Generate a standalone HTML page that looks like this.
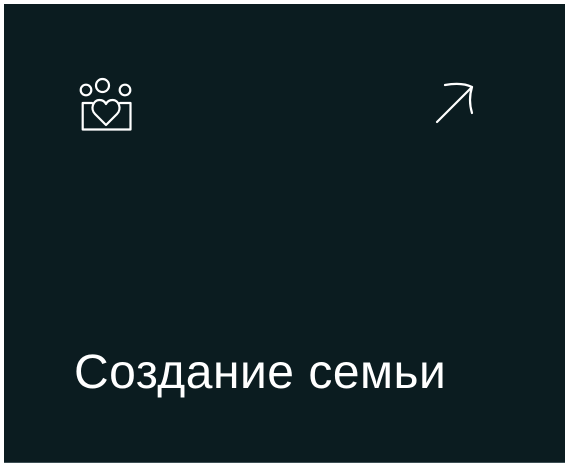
<!DOCTYPE html>
<html><head><meta charset="utf-8"><style>
html,body{margin:0;padding:0;background:#fff;width:569px;height:467px;overflow:hidden}
.card{position:absolute;left:4px;top:4px;width:561px;height:458px;background:#0b1c20;border-bottom:1px solid #3d4f54}
.t{position:absolute;left:74px;top:343px;color:#fff;font-family:"Liberation Sans",sans-serif;font-size:48px;line-height:60px;white-space:nowrap;letter-spacing:0.5px}
svg{position:absolute;left:0;top:0}
</style></head><body>
<div class="card"></div>
<svg width="569" height="467" fill="none" stroke="#fff" stroke-width="2.2" stroke-linecap="round" stroke-linejoin="round">
<circle cx="86" cy="90" r="5.3"/>
<circle cx="102.5" cy="85.5" r="6.5"/>
<circle cx="125" cy="90" r="5.3"/>
<path d="M92 103H82.7V129.5H105M120 103H130.5V129.5H105"/>
<path d="M106 125L95 114C90 109 93 100 99.5 100C103 100 105 102 106 104C107 102 109 100 112.5 100C119 100 122 109 117 114Z"/>
<path d="M437 122L472 87"/>
<path d="M445 85Q462 82 472 87Q468 100 472 113"/>
</svg>
<div class="t">Создание семьи</div>
</body></html>
